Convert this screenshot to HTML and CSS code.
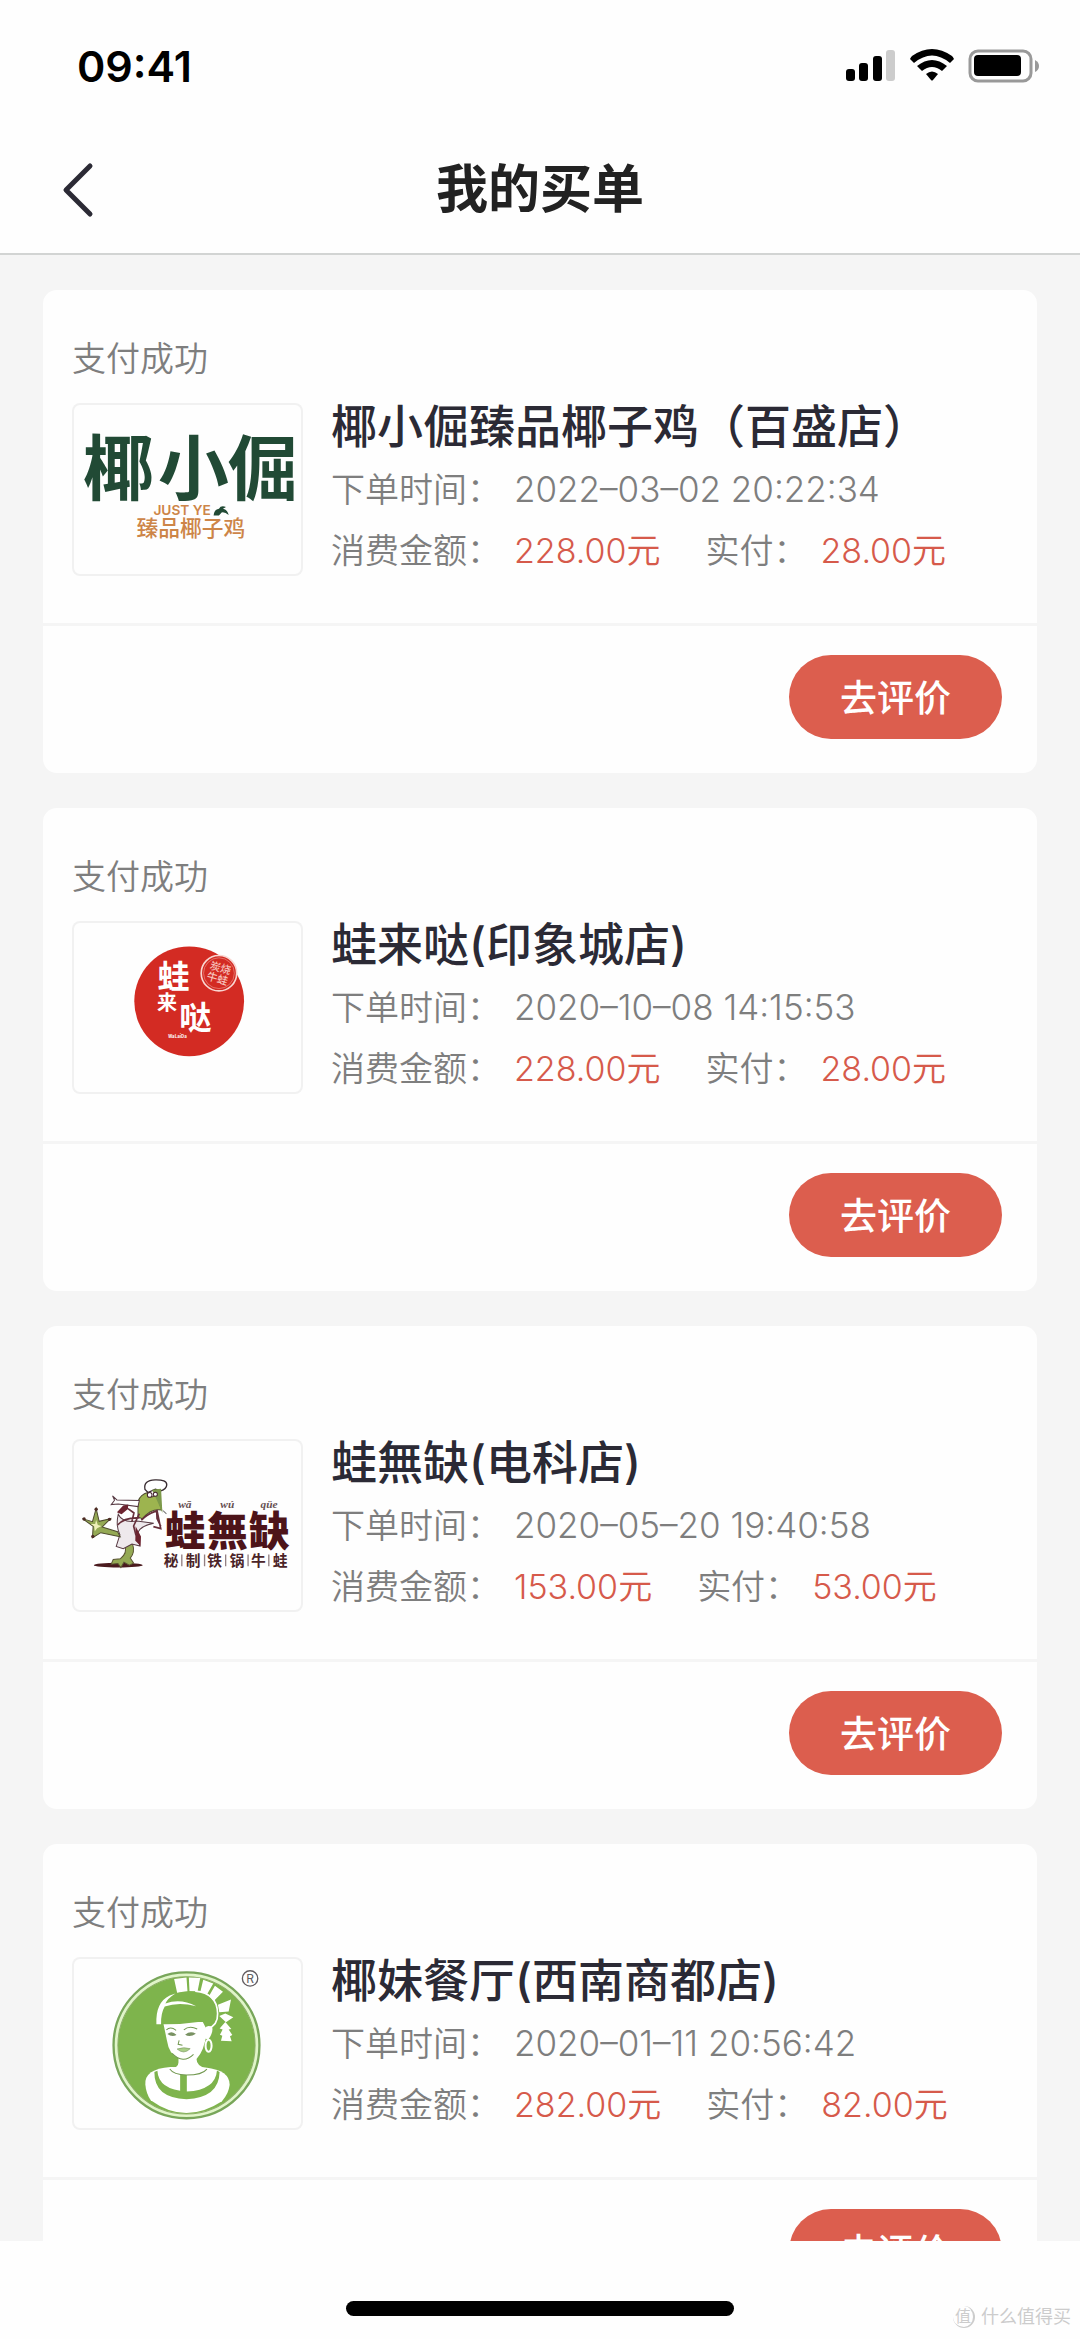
FILE: index.html
```html
<!DOCTYPE html>
<html lang="zh-CN">
<head>
	<meta charset="UTF-8">
	<meta name="viewport" content="width=device-width">
	<title>我的买单</title>
	<link rel="stylesheet" href="styles.css">
</head>
<body>
	<div class="status-bar">
		<span class="time">09:41</span>
		<svg class="status-icons" viewBox="0 0 194 34" aria-hidden="true">
			<rect x="0" y="20" width="9" height="12" rx="3"/>
			<rect x="13" y="14" width="9" height="18" rx="3"/>
			<rect x="27" y="7" width="9" height="25" rx="3"/>
			<rect x="40" y="1" width="9" height="31" rx="3" fill="#ccc"/>
			<path d="M64 10 Q65 8 66 7 Q86 -7 106 7 Q107 8 108 10 L104 14 Q86 -1 68 14 Z"/>
			<path d="M71 17 Q86 5 101 17 L96 22 Q86 14 76 22 Z"/>
			<path d="M80 25 Q86 20 92 25 L87 31 Q86 32 85 31 Z"/>
			<rect x="124" y="2" width="61" height="30" rx="8" fill="none" stroke="#999" stroke-width="3"/>
			<rect x="128" y="6" width="47" height="21" rx="4"/>
			<path d="M189 11 Q193 13 193 17 Q193 21 189 23 Z" fill="#999"/>
		</svg>
	</div>

	<header class="nav">
		<button class="back" type="button" aria-label="返回">
			<svg viewBox="0 0 32 56" aria-hidden="true"><path d="M28 4 L4 28 L28 52"/></svg>
		</button>
		<h1>我的买单</h1>
	</header>

	<main class="list">
		<section class="order">
			<div class="order-body">
				<p class="state">支付成功</p>
				<div class="shop">
					<svg class="thumb" viewBox="37 39 690 517" aria-hidden="true">
						<g class="logo-text" fill="#214a35" font-size="212" font-weight="700">
							<text x="176" y="312">椰</text>
							<text x="400" y="312">小</text>
							<text x="606" y="312">倔</text>
						</g>
						<text class="logo-latin" x="366" y="375" font-size="41" font-weight="600" fill="#cd8548">JUST YE</text>
						<text class="logo-text" x="392" y="436" font-size="65" font-weight="500" fill="#cd8548">臻品椰子鸡</text>
						<path d="M460 375 Q462 356 476 355 Q482 344 497 350 L488 355 Q502 358 505 374 Q494 364 484 366 L476 375 Z" fill="#214a35"/>
					</svg>
					<div class="info">
						<h2>椰小倔臻品椰子鸡（百盛店）</h2>
						<p><span class="label">下单时间：</span><span class="date">2022–03–02 20:22:34</span></p>
						<p><span class="label">消费金额：</span><span class="money">228.00元</span><span class="label">实付：</span><span class="money">28.00元</span></p>
					</div>
				</div>
			</div>
			<div class="order-foot"><button class="review" type="button">去评价</button></div>
		</section>

		<section class="order">
			<div class="order-body">
				<p class="state">支付成功</p>
				<div class="shop">
					<svg class="thumb" viewBox="37 37 690 517" aria-hidden="true">
						<circle cx="387" cy="277" r="164" fill="#d32b23"/>
						<circle cx="476" cy="193" r="53" fill="#d32b23" stroke="#f9d5d0" stroke-width="5"/>
						<circle cx="476" cy="193" r="46" fill="none" stroke="#ec9089" stroke-width="2"/>
						<g class="logo-text" fill="#f6c3bd" font-size="32" font-weight="500" transform="rotate(16 476 193)">
							<text x="476" y="188">炭烧</text>
							<text x="476" y="221">牛蛙</text>
						</g>
						<g class="logo-text" fill="#fff" font-weight="700">
							<text x="340" y="236" font-size="96">蛙</text>
							<text x="321" y="304" font-size="60">来</text>
							<text x="405" y="360" font-size="96">哒</text>
							<text x="352" y="387" font-size="13">WaLaiDa</text>
						</g>
					</svg>
					<div class="info">
						<h2>蛙来哒(印象城店)</h2>
						<p><span class="label">下单时间：</span><span class="date">2020–10–08 14:15:53</span></p>
						<p><span class="label">消费金额：</span><span class="money">228.00元</span><span class="label">实付：</span><span class="money">28.00元</span></p>
					</div>
				</div>
			</div>
			<div class="order-foot"><button class="review" type="button">去评价</button></div>
		</section>

		<section class="order">
			<div class="order-body">
				<p class="state">支付成功</p>
				<div class="shop">
					<svg class="thumb" viewBox="37 30 690 517" aria-hidden="true">
						<!-- frog -->
						<ellipse cx="175" cy="407" rx="73" ry="7" fill="#4a1a1e"/>
						<path d="M154 404 L160 390 L181 388 Q204 371 194 348 L218 344 Q226 368 211 386 L221 401 L208 407 L192 398 L183 414 L174 402 Z" fill="#94a954" stroke="#5a5433" stroke-width="3"/>
						<path d="M175 255 Q188 282 231 275 L281 282 Q222 294 234 330 L240 350 L216 344 L190 358 L169 351 L180 316 Q167 290 175 255 Z" fill="#eee9ec" stroke="#573a43" stroke-width="3"/>
						<path d="M68 268 L98 277 L109 238 L118 276 L152 268 L127 293 L173 307 L181 322 L123 310 L98 325 L100 291 Z" fill="#94a954" stroke="#4f4c2f" stroke-width="3"/>
						<path d="M109 272 L114 287 L125 290 L112 297 L105 306 L103 291 L93 284 L106 284 Z" fill="#eef0b8"/>
						<g fill="#4d2b24">
							<circle cx="73" cy="269" r="5"/>
							<circle cx="109" cy="240" r="5"/>
							<circle cx="149" cy="270" r="5"/>
							<circle cx="99" cy="321" r="5"/>
						</g>
						<path d="M234 216 Q242 196 263 190 L276 203 L291 198 L305 242 Q271 237 247 269 L234 262 Z" fill="#9db44f" stroke="#4f4c2f" stroke-width="3"/>
						<path d="M158 200 L171 212 L238 214 L234 232 L175 224 L154 226 L164 213 Z" fill="#fff" stroke="#573a43" stroke-width="3"/>
						<path d="M171 249 L190 229 L205 226 L204 239 L185 255 Z M227 291 L243 321 L242 350 L226 334 Z" fill="#6d2430"/>
						<path d="M204 238 L222 251 L216 276 M238 253 L221 290 L228 318 M244 273 Q258 256 291 244 L302 298 L280 292 M173 287 Q195 263 239 266 M290 246 L291 268 L302 290" fill="none" stroke="#67303b" stroke-width="5"/>
						<path d="M255 181 Q249 153 285 152 Q320 151 320 167 Q319 180 302 185 L286 180 L264 190 Z" fill="#fff" stroke="#392c31" stroke-width="4"/>
						<path d="M276 182 L303 179 L307 251 L292 216 Z" fill="#7c9949"/>
						<circle cx="269" cy="197" r="7" fill="#fff" stroke="#44232e" stroke-width="3"/>
						<circle cx="286" cy="195" r="6" fill="#fff" stroke="#44232e" stroke-width="3"/>
						<path d="M309 244 L319 254" stroke="#777" stroke-width="3"/>
						<g class="pinyin" fill="#665052">
							<text x="374" y="237">wā</text>
							<text x="501" y="237">wú</text>
							<text x="626" y="237">qüe</text>
						</g>
						<g class="logo-text" fill="#4d1419" font-size="122" font-weight="900">
							<text x="375" y="350">蛙</text>
							<text x="501" y="350">無</text>
							<text x="626" y="350">缺</text>
						</g>
						<g class="logo-text" fill="#4b2428" font-size="44" font-weight="700">
							<text x="333" y="410">秘</text>
							<text x="399" y="410">制</text>
							<text x="463" y="410">铁</text>
							<text x="530" y="410">锅</text>
							<text x="594" y="410">牛</text>
							<text x="659" y="410">蛙</text>
						</g>
						<path d="M365 375 V410 M433 375 V410 M496 375 V410 M563 375 V410 M625 375 V410" stroke="#938083" stroke-width="4"/>
					</svg>
					<div class="info">
						<h2>蛙無缺(电科店)</h2>
						<p><span class="label">下单时间：</span><span class="date">2020–05–20 19:40:58</span></p>
						<p><span class="label">消费金额：</span><span class="money">153.00元</span><span class="label">实付：</span><span class="money">53.00元</span></p>
					</div>
				</div>
			</div>
			<div class="order-foot"><button class="review" type="button">去评价</button></div>
		</section>

		<section class="order">
			<div class="order-body">
				<p class="state">支付成功</p>
				<div class="shop">
					<svg class="thumb" viewBox="37 42 690 517" aria-hidden="true">
						<circle cx="379" cy="306" r="218" fill="#e0f5c8" stroke="#78a65a" stroke-width="7"/>
						<circle cx="379" cy="306" r="205" fill="#7eb44c" stroke="#8bad67" stroke-width="3"/>
						<!-- shoulders and collar -->
						<path d="M331 371 Q253 377 256 423 Q258 449 272 470 Q375 545 485 473 Q505 451 508 424 Q509 381 436 372 Z" fill="#fff"/>
						<path d="M283 386 Q282 464 379 467 Q476 463 478 386 L470 381 Q466 439 380 444 Q295 439 292 382 Z" fill="#7eb44c"/>
						<path d="M360 395 H380 V452 H360 Z" fill="#7eb44c"/>
						<!-- headdress -->
						<path d="M342 108 L379 103 L382 145 L351 149 Z M386 103 L420 105 L412 145 L388 144 Z M429 110 L459 121 L440 154 L420 147 Z M464 128 L488 146 L459 175 L446 159 Z M473 185 L512 169 L505 205 L477 207 Z" fill="#fff"/>
						<path d="M477 218 L495 211 L519 222 L497 237 Z M495 236 L513 257 L505 259 L516 275 L509 279 L514 294 L482 292 L486 277 L479 274 L487 259 L478 256 Z" fill="#fff"/>
						<!-- face -->
						<path d="M309 236 L320 289 Q327 334 355 344 L355 357 Q355 373 329 376 Q341 394 379 394 Q424 394 439 375 Q409 369 409 347 Q438 316 443 236 Z" fill="#fff"/>
						<path d="M303 243 Q299 191 323 168 Q349 140 405 145 Q470 151 471 213 Q469 244 437 254 L427 235 Q368 244 303 243 Z" fill="#7eb44c"/>
						<path d="M289 243 Q286 177 329 157 L346 151 Q322 166 316 181 Q361 164 408 189 Q355 175 314 190 Q302 210 303 243 Z" fill="#fff"/>
						<path d="M405 144 Q471 150 472 211 Q473 246 443 256" fill="none" stroke="#fff" stroke-width="5"/>
						<path d="M432 257 Q441 243 456 252 Q459 268 445 288 L435 286 Z" fill="#fff"/>
						<ellipse cx="445" cy="307" rx="9" ry="18" fill="none" stroke="#fff" stroke-width="6"/>
						<path d="M319 260 Q331 248 348 261 M371 260 Q387 246 411 257 M357 291 L354 303 L367 306 M336 330 Q369 364 400 333 M329 377 Q340 394 379 395 Q426 395 440 377" fill="none" stroke="#71984f" stroke-width="3"/>
						<path d="M322 272 Q336 261 349 275 Q335 282 322 272 Z M375 274 Q390 261 407 271 Q389 284 375 274 Z" fill="#799263"/>
						<path d="M351 317 Q371 310 390 316 Q371 335 351 317 Z" fill="#a9cf86" stroke="#819c68" stroke-width="2"/>
						<circle cx="569" cy="106" r="23" fill="none" stroke="#625c60" stroke-width="4"/>
						<text class="logo-latin" x="569" y="119" font-size="36" fill="#625c60">R</text>
					</svg>
					<div class="info">
						<h2>椰妹餐厅(西南商都店)</h2>
						<p><span class="label">下单时间：</span><span class="date">2020–01–11 20:56:42</span></p>
						<p><span class="label">消费金额：</span><span class="money">282.00元</span><span class="label">实付：</span><span class="money">82.00元</span></p>
					</div>
				</div>
			</div>
			<div class="order-foot"><button class="review" type="button">去评价</button></div>
		</section>
	</main>

	<footer class="bottom">
		<div class="home-bar"></div>
		<div class="mark"><span class="mark-icon">值</span>什么值得买</div>
	</footer>
</body>
</html>
```

FILE: styles.css
```css
*{
	box-sizing: border-box;
}

body{
	display: flex;
	flex-direction: column;
	height: 100vh;
	margin: 0;
	background: #fefefe;
	color: #2b2a35;
	font-family: Inter, "Noto Sans CJK SC", sans-serif;
}

h1, h2, p{
	margin: 0;
}

button{
	border: 0;
	font-family: inherit;
	cursor: pointer;
}

/* top */
.status-bar{
	display: flex;
	flex: none;
	align-items: center;
	justify-content: space-between;
	height: 132px;
	padding: 0 40px 0 77px;
}

.time{
	color: #000;
	font-size: 43px;
	font-weight: 600;
}

.status-icons{
	width: 194px;
	height: 34px;
}

.nav{
	display: grid;
	flex: none;
	grid-template-columns: 120px 1fr 120px;
	align-items: center;
	height: 123px;
	padding-bottom: 5px;
	border-bottom: 2px solid #d2d4d3;
}

.back{
	height: 80px;
	padding: 0 0 0 62px;
	background: none;
	text-align: left;
}

.back svg{
	display: block;
	width: 32px;
	height: 56px;
	fill: none;
	stroke: #2b2a35;
	stroke-width: 5;
	stroke-linecap: round;
	stroke-linejoin: round;
}

.nav h1{
	color: #222;
	font-size: 52px;
	font-weight: 600;
	line-height: 72px;
	text-align: center;
}

/* orders */
.list{
	flex: 1;
	min-height: 0;
	padding: 35px 43px;
	overflow-y: auto;
	background: #f5f5f5;
	scrollbar-width: none;
}

.order{
	margin-bottom: 35px;
	border-radius: 14px;
	background: #fefefe;
}

.order-body{
	padding: 45px 29px 42px;
	border-bottom: 3px solid #f5f5f5;
}

.state{
	color: #7e7e7e;
	font-size: 34px;
	font-weight: 350;
	line-height: 48px;
}

.shop{
	display: flex;
	gap: 28px;
	margin-top: 20px;
}

.thumb{
	flex: none;
	width: 231px;
	height: 173px;
	border-radius: 8px;
	box-shadow: inset 0 0 0 2px #f1f1f1;
}

.logo-text{
	font-family: "Noto Sans CJK SC", sans-serif;
	text-anchor: middle;
}

.logo-latin{
	font-family: Inter, sans-serif;
	text-anchor: middle;
}

.pinyin{
	font-family: "Liberation Serif", serif;
	font-size: 34px;
	font-style: italic;
	font-weight: 700;
	text-anchor: middle;
}

.info{
	flex: 1;
	min-width: 0;
}

.info h2{
	height: 56px;
	font-size: 46px;
	font-weight: 500;
	line-height: 46px;
	white-space: nowrap;
}

.info p{
	color: #7e7e7e;
	font-size: 34px;
	font-weight: 350;
	line-height: 61px;
	white-space: nowrap;
}

.label{
	margin-right: 13px;
}

.date{
	font-size: 35px;
}

.info .money{
	margin-right: 45px;
	color: #d65a4b;
}

.order-foot{
	display: flex;
	justify-content: flex-end;
	padding: 29px 35px 34px;
}

.review{
	width: 213px;
	height: 84px;
	padding: 0 0 2px;
	border-radius: 42px;
	background: #dc5e4e;
	color: #fff;
	font-size: 37px;
	font-weight: 500;
}

/* bottom */
.bottom{
	position: relative;
	flex: none;
	height: 98px;
	padding-top: 60px;
}

.home-bar{
	width: 36%;
	height: 15px;
	margin: 0 auto;
	border-radius: 8px;
	background: #000;
}

.mark{
	position: absolute;
	right: 9px;
	bottom: 9px;
	display: flex;
	gap: 6px;
	align-items: center;
	color: #ccc;
	font-size: 18px;
	line-height: 26px;
}

.mark-icon{
	width: 22px;
	height: 22px;
	border-right: 2px solid #ccc;
	border-bottom: 1px solid #ccc;
	border-radius: 50%;
	font-size: 16px;
	line-height: 20px;
	text-align: center;
}
```
